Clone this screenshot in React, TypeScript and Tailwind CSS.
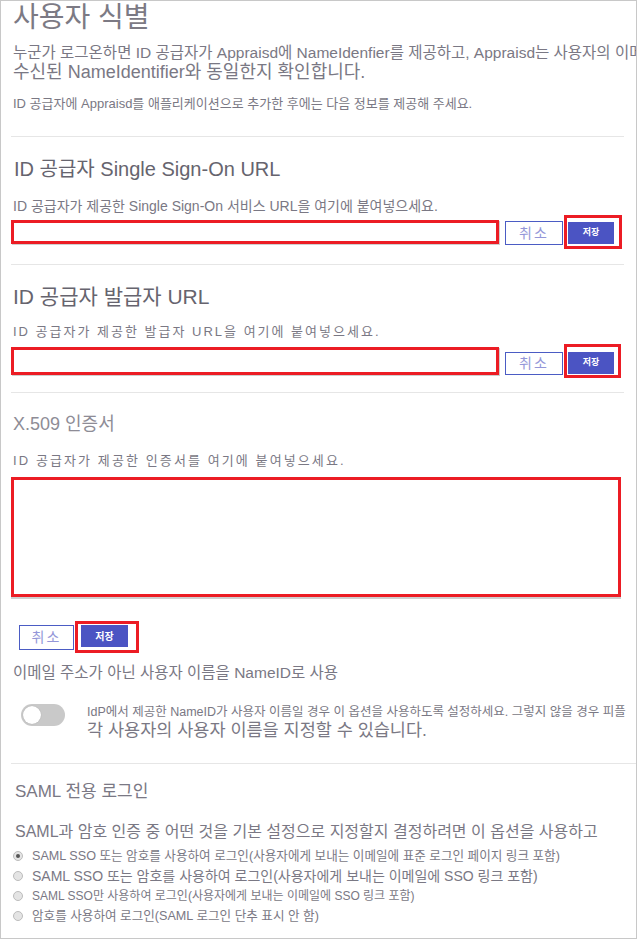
import React from "react";

const font = "font-['Liberation_Sans','Noto_Sans_CJK_KR',sans-serif]";

function Separator({ wide }: { wide?: boolean }) {
  return <div className={`h-px bg-[#e6e6e6] ${wide ? "w-[627px]" : "w-[613px]"}`} />;
}

function CancelButton({ className = "" }: { className?: string }) {
  return (
    <button
      type="button"
      className={`flex items-center justify-center border border-[#4b5cc4] bg-white text-[14px] tracking-[2px] text-[#9496d8] ${className}`}
    >
      취소
    </button>
  );
}

function SaveButton({ box, inner, text = "text-[9px]" }: { box: string; inner: string; text?: string }) {
  return (
    <div className={`border-[3px] border-[#ec1c24] ${box}`}>
      <button
        type="button"
        className={`flex items-center justify-center bg-[#4b54c3] font-bold text-white ${text} ${inner}`}
      >
        저장
      </button>
    </div>
  );
}

function Radio({ checked, label, size }: { checked?: boolean; label: string; size: string }) {
  return (
    <label className="flex h-[20px] items-center">
      <span className="ml-[2px] flex h-[10px] w-[10px] items-center justify-center rounded-full border border-[#bcbcbc] bg-[#e4e4e4]">
        {checked && <span className="h-[4px] w-[4px] rounded-full bg-[#555]" />}
      </span>
      <span className={`ml-[9px] whitespace-nowrap text-[#7a7884] ${size}`}>{label}</span>
    </label>
  );
}

export default function App() {
  return (
    <div className={`h-[939px] w-[637px] overflow-hidden border border-[#c8c8c8] bg-white pl-[10px] ${font}`}>
      <h1 className="ml-[2px] h-[34px] text-[28px] leading-[34px] font-normal text-[#7c7a84]">사용자 식별</h1>

      <p className="mt-[9px] ml-[2px] whitespace-nowrap text-[15.5px] leading-[18px] text-[#7a7884]">
        누군가 로그온하면 ID 공급자가 Appraisd에 NameIdenfier를 제공하고, Appraisd는 사용자의 이메
      </p>
      <p className="ml-[2px] text-[18px] leading-[20px] text-[#7a7884]">수신된 NameIdentifier와 동일한지 확인합니다.</p>
      <p className="mt-[14px] ml-[2px] text-[13px] leading-[16px] text-[#7a7884]">
        ID 공급자에 Appraisd를 애플리케이션으로 추가한 후에는 다음 정보를 제공해 주세요.
      </p>

      <div className="mt-[24px]">
        <Separator />
      </div>

      <h2 className="mt-[20px] ml-[3px] text-[20px] leading-[24px] text-[#66646e]">ID 공급자 Single Sign-On URL</h2>
      <p className="mt-[17px] ml-[2px] text-[14px] leading-[16px] text-[#7a7884]">
        ID 공급자가 제공한 Single Sign-On 서비스 URL을 여기에 붙여넣으세요.
      </p>
      <div className="mt-px flex h-[34px] items-center">
        <div className="h-[24px] w-[488px] border-[3px] border-[#ec1c24] bg-white shadow-[1px_1px_0_#cfcfcf]" />
        <CancelButton className="ml-[6px] mt-[2px] h-[24px] w-[58px]" />
        <SaveButton box="ml-px h-[34px] w-[58px] pt-[4px] pl-px" inner="h-[22px] w-[46px]" />
      </div>

      <div className="mt-[15px]">
        <Separator />
      </div>

      <h2 className="mt-[20px] ml-[2px] text-[21px] leading-[24px] text-[#66646e]">ID 공급자 발급자 URL</h2>
      <p className="mt-[15px] ml-[2px] text-[13px] leading-[16px] tracking-[2px] text-[#7a7884]">
        ID 공급자가 제공한 발급자 URL을 여기에 붙여넣으세요.
      </p>
      <div className="mt-[4px] flex h-[34px] items-center">
        <div className="h-[28px] w-[488px] border-[3px] border-[#ec1c24] bg-white shadow-[1px_1px_0_#cfcfcf]" />
        <CancelButton className="ml-[6px] mt-[4px] h-[23px] w-[58px]" />
        <SaveButton box="ml-px h-[34px] w-[57px] pt-[5px] pl-px" inner="h-[22px] w-[46px]" />
      </div>

      <div className="mt-[14px]">
        <Separator />
      </div>

      <h2 className="mt-[19px] ml-[2px] text-[18px] leading-[24px] text-[#8e8c96]">X.509 인증서</h2>
      <p className="mt-[17px] ml-[2px] text-[13px] leading-[16px] tracking-[2.1px] text-[#7a7884]">
        ID 공급자가 제공한 인증서를 여기에 붙여넣으세요.
      </p>
      <div className="mt-[8px] h-[120px] w-[610px] border-[3px] border-[#ec1c24] bg-white shadow-[0_2px_0_#cfcfcf]" />

      <div className="mt-[24px] flex h-[32px] items-center">
        <CancelButton className="ml-[8px] h-[25px] w-[55px]" />
        <SaveButton box="ml-px h-[32px] w-[64px] pt-px pl-[3px]" inner="h-[22px] w-[47px]" text="text-[10px]" />
      </div>

      <p className="mt-[10px] ml-[2px] text-[15.5px] leading-[20px] text-[#7a7884]">이메일 주소가 아닌 사용자 이름을 NameID로 사용</p>

      <div className="mt-[21px] flex">
        <div className="ml-[10px] flex h-[22px] w-[44px] shrink-0 items-center rounded-full bg-[#c9c9c9] pl-[2px]">
          <div className="h-[18px] w-[18px] rounded-full bg-white shadow-[0_0_1px_#999]" />
        </div>
        <div className="ml-[22px] min-w-0 overflow-hidden">
          <p className="whitespace-nowrap text-[12.5px] leading-[16px] text-[#7a7884]">
            IdP에서 제공한 NameID가 사용자 이름일 경우 이 옵션을 사용하도록 설정하세요. 그렇지 않을 경우 피플
          </p>
          <p className="text-[17.5px] leading-[20px] text-[#7a7884]">각 사용자의 사용자 이름을 지정할 수 있습니다.</p>
        </div>
      </div>

      <div className="mt-[23px]">
        <Separator wide />
      </div>

      <h3 className="mt-[18px] ml-[4px] text-[17px] leading-[20px] text-[#7a7884]">SAML 전용 로그인</h3>
      <p className="mt-[20px] ml-[4px] text-[16px] leading-[20px] text-[#7a7884]">
        SAML과 암호 인증 중 어떤 것을 기본 설정으로 지정할지 결정하려면 이 옵션을 사용하고
      </p>

      <div className="mt-[4px]">
        <Radio checked size="text-[12.6px]" label="SAML SSO 또는 암호를 사용하여 로그인(사용자에게 보내는 이메일에 표준 로그인 페이지 링크 포함)" />
        <Radio size="text-[14px]" label="SAML SSO 또는 암호를 사용하여 로그인(사용자에게 보내는 이메일에 SSO 링크 포함)" />
        <Radio size="text-[12px]" label="SAML SSO만 사용하여 로그인(사용자에게 보내는 이메일에 SSO 링크 포함)" />
        <Radio size="text-[12.6px]" label="암호를 사용하여 로그인(SAML 로그인 단추 표시 안 함)" />
      </div>
    </div>
  );
}
